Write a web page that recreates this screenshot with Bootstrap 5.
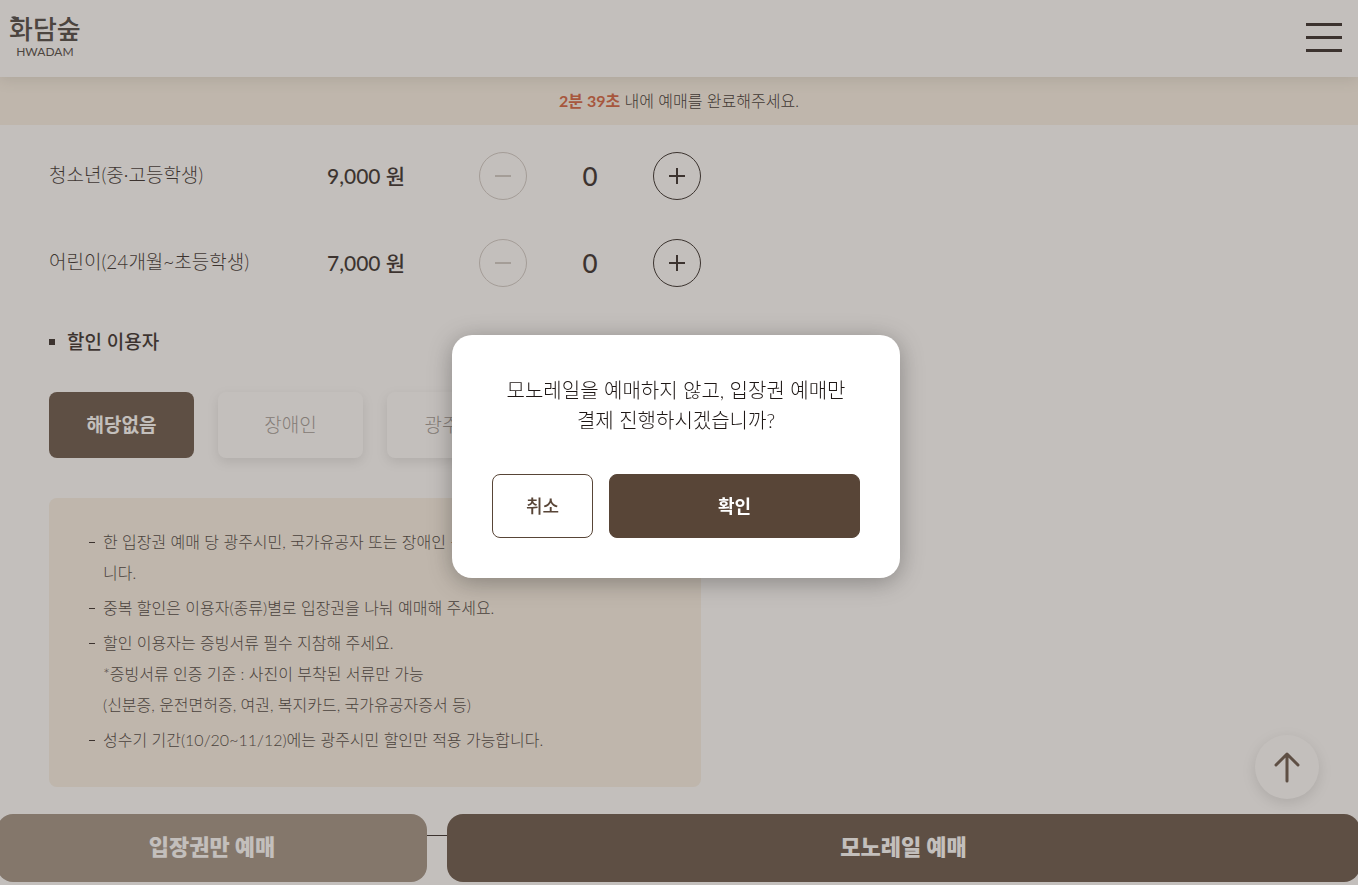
<!DOCTYPE html>
<html lang="ko">
<head>
<meta charset="utf-8">
<meta name="viewport" content="width=device-width, initial-scale=1">
<title>화담숲 예매</title>
<link href="https://cdn.jsdelivr.net/npm/bootstrap@5.3.0/dist/css/bootstrap.min.css" rel="stylesheet">
<style>
:root { --brown: #584537; --ink: #1e1715; --beige: #f8f0e4; }
body { font-family: Lato, "Noto Sans CJK KR", sans-serif; font-weight: 300; font-size: 16px; color: var(--ink); height: 100vh; overflow: hidden; }
.site-head { height: 77px; padding: 0 16px 2px 9px; background: #fff; box-shadow: 0 2px 14px rgba(60,70,50,.16); position: relative; z-index: 2; }
.brand { color: #3a3431; text-decoration: none; line-height: 1; position: relative; }
.brand-ko { font-size: 26px; font-weight: 500; line-height: 29px; }
.brand-en { font-size: 12px; font-weight: 400; line-height: 16px; }
.brand-leaf { position: absolute; left: 2px; top: 1px; }
.burger { width: 36px; height: 30px; }
.timer { height: 48px; background: var(--beige); }
.timer strong { color: #d0522c; font-weight: 700; }
.booking { width: 100%; max-width: 750px; padding: 7px 49px 0; }
.fare { height: 87px; }
.fare-name { width: 278px; font-size: 19px; }
.fare-price { width: 152px; font-size: 21px; font-weight: 500; }
.stepper { width: 222px; }
.step { width: 48px; height: 48px; border: 1px solid var(--ink); background: none; color: var(--ink); }
.step:disabled { color: #ccc6c2; border-color: #ccc6c2; }
.count { font-size: 26px; font-weight: 500; line-height: 48px; }
.group-title { font-size: 19px; font-weight: 500; line-height: 28px; margin: 22px 0 36px; }
.group-title::before { content: ""; width: 6px; height: 6px; background: var(--ink); margin-right: 12px; }
.kinds { gap: 24px; }
.kind { flex: 1 1 0; height: 66px; border: 0; border-radius: 8px; background: #fff; color: #96908c; font-size: 19px; font-weight: 300; box-shadow: 0 4px 12px rgba(0,0,0,.12); }
.kind.active { background: var(--brown); color: #fff; font-weight: 700; box-shadow: none; }
.notes { margin-top: 40px; padding: 28px 40px 28px; border-radius: 8px; background: var(--beige); line-height: 31px; }
.notes li { position: relative; padding-left: 14px; margin-bottom: 4px; color: #352e2b; white-space: nowrap; }
.notes li::before { content: ""; position: absolute; left: 0; top: 16px; width: 6px; height: 1px; background: #1e1715; }
.rule { margin: 48px 0 0; border-top: 1px solid var(--ink); opacity: 1; }
.to-top { right: 39px; bottom: 86px; width: 64px; height: 64px; border: 0; background: #fff; color: var(--brown); box-shadow: 0 4px 14px rgba(0,0,0,.14); }
.actions { bottom: 3px; left: -3px; right: -2px; gap: 20px; }
.actions button { height: 68px; padding: 0 0 4px; border: 0; border-radius: 16px; background: var(--brown); color: #fff; font-size: 22px; font-weight: 900; }
.actions .only { flex: 430 1 0; background: #968779; }
.actions .mono { flex: 913 1 0; }
.veil { z-index: 1050; background: rgba(105,95,87,.4); padding: 28px 6px 0 0; }
.ask { width: 448px; padding: 40px; border-radius: 20px; background: #fff; box-shadow: 0 4px 24px rgba(0,0,0,.3); }
.ask p { font-size: 20px; line-height: 30px; margin-bottom: 39px; }
.ask button { height: 64px; border: 1px solid var(--brown); border-radius: 8px; font-size: 18px; }
.ask .no { flex: 0 0 101px; background: #fff; color: var(--brown); font-weight: 500; }
.ask .yes { background: var(--brown); color: #fff; font-weight: 700; }
</style>
</head>
<body>
<header class="site-head d-flex align-items-center justify-content-between">
  <a href="#" class="brand d-flex flex-column align-items-center">
    <svg class="brand-leaf" width="9" height="5" fill="currentColor" aria-hidden="true"><path d="M0 1C4-1 7 1 8 5 5 5 3 4 0 1z"/></svg>
    <span class="brand-ko">화담숲</span>
    <span class="brand-en">HWADAM</span>
  </a>
  <button type="button" class="burger border-0 bg-transparent p-0 d-flex" aria-label="메뉴">
    <svg width="36" height="30" fill="#1e1715" aria-hidden="true"><path d="M0 0h36v3H0zM0 13h36v3H0zM0 26h36v3H0z"/></svg>
  </button>
</header>
<div class="timer d-flex align-items-center justify-content-center"><span><strong>2분 39초</strong> 내에 예매를 완료해주세요.</span></div>

<main>
  <div class="booking">
    <div class="fare d-flex align-items-center">
      <span class="fare-name">청소년(중·고등학생)</span>
      <span class="fare-price">9,000 원</span>
      <div class="stepper d-flex justify-content-between">
        <button type="button" class="step rounded-circle p-0 d-flex align-items-center justify-content-center" disabled aria-label="빼기"><svg width="16" height="16" stroke="currentColor" stroke-width="2"><path d="M0 8h16"/></svg></button>
        <output class="count">0</output>
        <button type="button" class="step rounded-circle p-0 d-flex align-items-center justify-content-center" aria-label="더하기"><svg width="16" height="16" stroke="currentColor" stroke-width="2"><path d="M0 8h16M8 0v16"/></svg></button>
      </div>
    </div>
    <div class="fare d-flex align-items-center">
      <span class="fare-name">어린이(24개월~초등학생)</span>
      <span class="fare-price">7,000 원</span>
      <div class="stepper d-flex justify-content-between">
        <button type="button" class="step rounded-circle p-0 d-flex align-items-center justify-content-center" disabled aria-label="빼기"><svg width="16" height="16" stroke="currentColor" stroke-width="2"><path d="M0 8h16"/></svg></button>
        <output class="count">0</output>
        <button type="button" class="step rounded-circle p-0 d-flex align-items-center justify-content-center" aria-label="더하기"><svg width="16" height="16" stroke="currentColor" stroke-width="2"><path d="M0 8h16M8 0v16"/></svg></button>
      </div>
    </div>
    <h2 class="group-title d-flex align-items-center">할인 이용자</h2>
    <div class="kinds d-flex">
      <button type="button" class="kind active">해당없음</button>
      <button type="button" class="kind">장애인</button>
      <button type="button" class="kind">광주시민</button>
      <button type="button" class="kind">유공자</button>
    </div>
    <ul class="notes list-unstyled mb-0">
      <li>한 입장권 예매 당 광주시민, 국가유공자 또는 장애인 중복 할인은 불가합<br>니다.</li>
      <li>중복 할인은 이용자(종류)별로 입장권을 나눠 예매해 주세요.</li>
      <li>할인 이용자는 증빙서류 필수 지참해 주세요.<br>*증빙서류 인증 기준 : 사진이 부착된 서류만 가능<br>(신분증, 운전면허증, 여권, 복지카드, 국가유공자증서 등)</li>
      <li>성수기 기간(10/20~11/12)에는 광주시민 할인만 적용 가능합니다.</li>
    </ul>
    <hr class="rule">
  </div>
</main>

<button type="button" class="to-top position-fixed rounded-circle p-0 d-flex align-items-center justify-content-center" aria-label="맨 위로">
  <svg width="26" height="32" fill="none" stroke="currentColor" stroke-width="3" stroke-linecap="round" stroke-linejoin="round"><path d="M13 30V3M2 14 13 3l11 11"/></svg>
</button>
<div class="actions position-fixed d-flex">
  <button type="button" class="only">입장권만 예매</button>
  <button type="button" class="mono">모노레일 예매</button>
</div>

<div class="veil position-fixed top-0 start-0 w-100 h-100 d-flex align-items-center justify-content-center">
  <div class="ask text-center" role="dialog" aria-modal="true" aria-labelledby="askText">
    <p id="askText">모노레일을 예매하지 않고, 입장권 예매만<br>결제 진행하시겠습니까?</p>
    <div class="d-flex gap-3">
      <button type="button" class="no">취소</button>
      <button type="button" class="yes flex-grow-1">확인</button>
    </div>
  </div>
</div>
<script src="https://cdn.jsdelivr.net/npm/bootstrap@5.3.0/dist/js/bootstrap.bundle.min.js"></script>
</body>
</html>
